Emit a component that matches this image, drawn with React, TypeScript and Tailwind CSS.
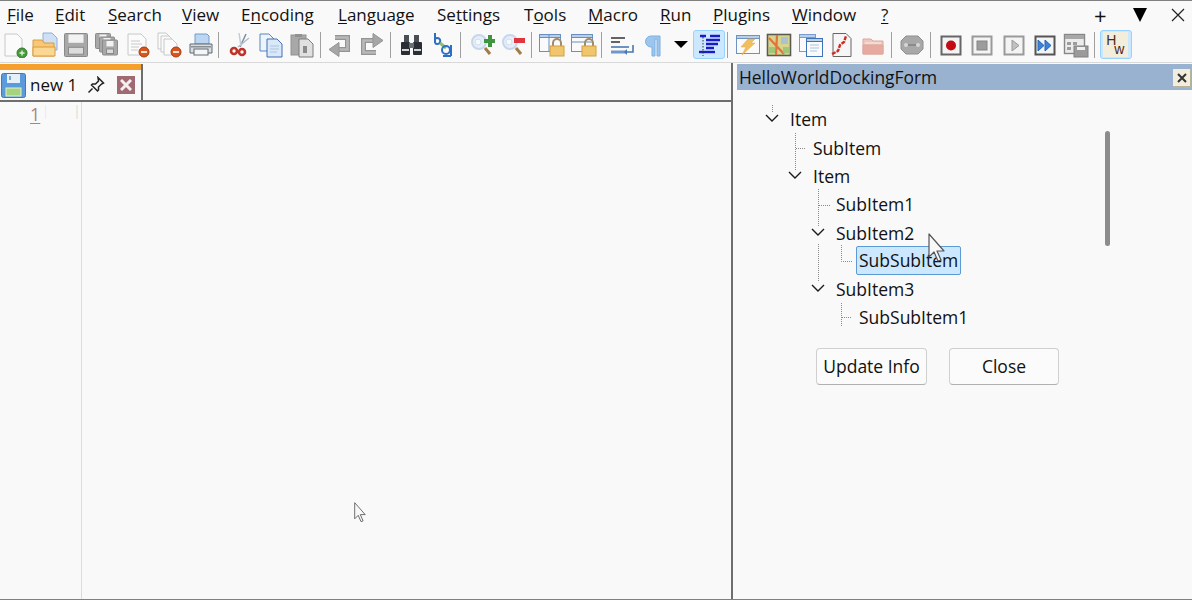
import type { ReactNode } from 'react'

const menus = [
  { label: 'File', key: 'F', width: 'w-[48px]' },
  { label: 'Edit', key: 'E', width: 'w-[53px]' },
  { label: 'Search', key: 'S', width: 'w-[74px]' },
  { label: 'View', key: 'V', width: 'w-[59px]' },
  { label: 'Encoding', key: 'n', width: 'w-[97px]' },
  { label: 'Language', key: 'L', width: 'w-[99px]' },
  { label: 'Settings', key: 't', width: 'w-[87px]' },
  { label: 'Tools', key: 'o', width: 'w-[64px]' },
  { label: 'Macro', key: 'M', width: 'w-[72px]' },
  { label: 'Run', key: 'R', width: 'w-[53px]' },
  { label: 'Plugins', key: 'P', width: 'w-[79px]' },
  { label: 'Window', key: 'W', width: 'w-[89px]' },
  { label: '?', key: '?', width: 'w-[20px]' },
]

function MenuLabel({ label, hot }: { label: string; hot: string }) {
  const i = label.indexOf(hot)
  return (
    <>
      {label.slice(0, i)}
      <span className="underline underline-offset-2">{hot}</span>
      {label.slice(i + 1)}
    </>
  )
}

function Ico({ children }: { children: ReactNode }) {
  return (
    <svg width="26" height="26" viewBox="0 0 26 26" className="shrink-0">
      {children}
    </svg>
  )
}

function Btn({ children, first }: { children: ReactNode; first?: boolean }) {
  return <div className={first ? 'w-[29px] flex justify-center' : 'w-[31.2px] flex justify-center'}>{children}</div>
}

function ActiveBtn({ children }: { children: ReactNode }) {
  return (
    <div className="w-[32px] h-[29px] flex items-center justify-center bg-[#cce8ff] border border-[#99d1ff] rounded-[3px]">
      {children}
    </div>
  )
}

function Sep() {
  return (
    <div className="w-[8px] pl-[2px] flex">
      <div className="w-px h-[26px] bg-[#a0a0a0]" />
    </div>
  )
}

const Page = ({ x = 5, y = 2, w = 15, h = 20, stroke = '#b5b5b5', fill = '#fbfbfb' }) => (
  <path d={`M${x} ${y}h${w - 5}l5 5v${h - 5}h-${w}z`} fill={fill} stroke={stroke} />
)

const Floppy = ({ x = 2, y = 2, s = 22, c = '#8a8a8a', f = '#a8a8a8' }) => (
  <g>
    <rect x={x} y={y} width={s} height={s} rx="1" fill={f} stroke={c} />
    <rect x={x + 4} y={y + 1} width={s - 8} height={s * 0.36} fill="#f2f2f2" />
    <rect x={x + 4} y={y + s * 0.6} width={s - 8} height={s * 0.3} fill="#dcdcdc" stroke={c} />
  </g>
)

const MinusBadge = ({ x = 19, y = 20 }) => (
  <g>
    <circle cx={x} cy={y} r="5" fill="#d9541e" stroke="#a83c10" />
    <rect x={x - 3} y={y - 1} width="6" height="2" fill="#f6e2c8" />
  </g>
)

const Lock = ({ x = 12, y = 12 }) => (
  <g>
    <path d={`M${x + 3} ${y + 4}v-3a4 4 0 0 1 8 0v3`} fill="none" stroke="#a08c68" strokeWidth="2" />
    <rect x={x} y={y + 4} width="14" height="10" fill="#f0c66c" stroke="#d4a040" />
  </g>
)

const Win = ({ x = 2, y = 3, w = 19, h = 17, c = '#6b8fc0' }) => (
  <g>
    <rect x={x} y={y} width={w} height={h} fill="#fafafa" stroke={c} />
    <rect x={x} y={y} width={w} height="3" fill="#b9cfe8" stroke={c} />
  </g>
)

const Framed = ({ children, c = '#808080' }: { children: ReactNode; c?: string }) => (
  <g>
    <rect x="3.5" y="4.5" width="19" height="18" fill="#f4f4f4" stroke={c} strokeWidth="2" />
    {children}
  </g>
)

const Magnify = ({ badge }: { badge: ReactNode }) => (
  <g>
    <circle cx="10" cy="10" r="7" fill="#e6eef8" stroke="#c6d7ec" strokeWidth="2" />
    <circle cx="9" cy="10" r="3" fill="#f5f8fc" stroke="#d0deee" />
    <path d="M16 16l5 6" stroke="#a37b45" strokeWidth="3" />
    {badge}
  </g>
)

function Toolbar() {
  return (
    <div className="h-[33px] pb-[2px] flex items-center">
      <Btn first>
        <Ico>
          <Page x={3} y={2} w={17} h={22} stroke="#c8c8c8" />
          <circle cx="20" cy="21" r="5" fill="#4a9a3c" stroke="#2f7a2a" />
          <path d="M20 18.500v5M17.500 21h5" stroke="#dff2d8" strokeWidth="1.4" />
        </Ico>
      </Btn>
      <Btn>
        <Ico>
          <Page x={11} y={1} w={14} h={17} stroke="#8fb0d8" fill="#cfe0f4" />
          <path d="M1 8h9l2 3h10v13H1z" fill="#f7c877" stroke="#dd9a3c" />
          <path d="M1 15h22v9H1z" fill="#fbd794" stroke="#dd9a3c" />
        </Ico>
      </Btn>
      <Btn>
        <Ico>
          <Floppy x={1.5} y={1.5} s={23} />
        </Ico>
      </Btn>
      <Btn>
        <Ico>
          <Floppy x={1.5} y={1.5} s={15} />
          <Floppy x={5.5} y={5} s={15} />
          <Floppy x={8.5} y={8} s={15} />
        </Ico>
      </Btn>
      <Btn>
        <Ico>
          <Page x={3} y={2} w={18} h={21} stroke="#c8c8c8" />
          <path d="M6 9h9M6 12h11M6 15h8M6 18h7" stroke="#c8c8c8" />
          <MinusBadge x={19} y={20} />
        </Ico>
      </Btn>
      <Btn>
        <Ico>
          <Page x={2} y={1} w={13} h={16} stroke="#c8c8c8" />
          <Page x={5} y={4} w={13} h={16} stroke="#c8c8c8" />
          <Page x={8} y={7} w={13} h={16} stroke="#c8c8c8" />
          <MinusBadge x={20} y={20} />
        </Ico>
      </Btn>
      <Btn>
        <Ico>
          <path d="M7 2h12l2 2v8H7z" fill="#bcd6f2" stroke="#6f9bd0" />
          <path d="M2 12h22v9H2z" fill="#dcdcdc" stroke="#5f6b78" />
          <rect x="6" y="17" width="14" height="6" fill="#f6f6f6" stroke="#5f6b78" />
          <rect x="3" y="14" width="20" height="1.500" fill="#8a8f96" />
        </Ico>
      </Btn>
      <Sep />
      <Btn>
        <Ico>
          <path d="M19 2l-6 13" stroke="#7a8ea4" strokeWidth="1.500" />
          <path d="M22 6L11 15" stroke="#b1bdca" strokeWidth="1.500" />
          <path d="M12 1l2 13" stroke="#c2ccd6" strokeWidth="1.500" />
          <circle cx="7" cy="19" r="3" fill="none" stroke="#bf3328" strokeWidth="2.600" />
          <circle cx="15" cy="20" r="3" fill="none" stroke="#bf3328" strokeWidth="2.600" />
        </Ico>
      </Btn>
      <Btn>
        <Ico>
          <Page x={2} y={2} w={14} h={17} stroke="#5b85c0" fill="#eef4fb" />
          <Page x={9} y={7} w={15} h={18} stroke="#3f6fb5" fill="#dbe8f7" />
          <path d="M12 14h9M12 17h9M12 20h7" stroke="#a9c4e4" />
        </Ico>
      </Btn>
      <Btn>
        <Ico>
          <rect x="2" y="3" width="15" height="20" fill="#a8a8a8" stroke="#919191" />
          <rect x="6" y="2" width="7" height="3" fill="#919191" />
          <Page x={10} y={7} w={14} h={18} stroke="#7d7d7d" fill="#e0e0e0" />
          <rect x="14" y="14" width="4" height="7" fill="#8a8a8a" />
        </Ico>
      </Btn>
      <Sep />
      <Btn>
        <Ico>
          <path d="M7 5.500h12.500v12H10" fill="none" stroke="#949494" strokeWidth="5" />
          <path d="M7 5.500h12.500v12H10" fill="none" stroke="#b8b8b8" strokeWidth="2.600" />
          <path d="M11 10.500l-10 7 10 7z" fill="#a6a6a6" stroke="#949494" />
        </Ico>
      </Btn>
      <Btn>
        <Ico>
          <path d="M16 8.500H4.500v12H17" fill="none" stroke="#949494" strokeWidth="5" />
          <path d="M16 8.500H4.500v12H17" fill="none" stroke="#b8b8b8" strokeWidth="2.600" />
          <path d="M14 1.500l10 7-10 7z" fill="#a6a6a6" stroke="#949494" />
        </Ico>
      </Btn>
      <Sep />
      <Btn>
        <Ico>
          <rect x="5" y="3" width="5" height="8" fill="#4a4f55" />
          <rect x="15" y="3" width="5" height="8" fill="#4a4f55" />
          <rect x="2" y="10" width="9" height="13" rx="1" fill="#2b2f34" />
          <rect x="14" y="10" width="9" height="13" rx="1" fill="#2b2f34" />
          <rect x="10" y="11" width="5" height="5" fill="#6a7078" />
          <rect x="3" y="17" width="7" height="2" fill="#d0d4d8" />
          <rect x="15" y="17" width="7" height="2" fill="#d0d4d8" />
        </Ico>
      </Btn>
      <Btn>
        <Ico>
          <path d="M3 1v10M3 7a3 3 0 1 1 0 4" fill="none" stroke="#2d6fc4" strokeWidth="2" transform="translate(2 0)" />
          <path d="M10 11l6 5" stroke="#8cc06a" strokeWidth="3" />
          <circle cx="16" cy="18" r="4" fill="none" stroke="#2d6fc4" strokeWidth="2" />
          <path d="M21 13v11M13 24h8" stroke="#2d6fc4" strokeWidth="2" />
        </Ico>
      </Btn>
      <Sep />
      <Btn>
        <Ico>
          <Magnify badge={<path d="M15 7h4V3h4v4h3v4h-3v4h-4v-4h-4z" fill="#3f9440" />} />
        </Ico>
      </Btn>
      <Btn>
        <Ico>
          <Magnify badge={<rect x="14" y="6" width="11" height="5" fill="#e0353f" />} />
        </Ico>
      </Btn>
      <Sep />
      <Btn>
        <Ico>
          <Win x={0.5} y={2.5} w={21} h={17} />
          <path d="M10 3v16" stroke="#6b8fc0" />
          <Lock x={11} y={10} />
        </Ico>
      </Btn>
      <Btn>
        <Ico>
          <Win x={0.5} y={2.5} w={21} h={17} />
          <path d="M1 10h20" stroke="#6b8fc0" />
          <Lock x={11} y={10} />
        </Ico>
      </Btn>
      <Sep />
      <Btn>
        <Ico>
          <path d="M1 6h14M1 10h9" stroke="#333" strokeWidth="1.600" />
          <path d="M1 15h18" stroke="#4a78b0" strokeWidth="1.600" />
          <path d="M1 20h16" stroke="#6f98c8" strokeWidth="3" />
          <path d="M23 13v7h-6" fill="none" stroke="#4a78b0" strokeWidth="1.600" />
          <path d="M17 17l-3 3 3 3z" fill="#4a78b0" />
        </Ico>
      </Btn>
      <Btn>
        <Ico>
          <path d="M19 4H10a5 5 0 0 0 0 11h1v9h3V7h2v17h3z" fill="#9cc6ee" stroke="#7fb0e0" />
        </Ico>
      </Btn>
      <div className="w-[23px] flex justify-center">
        <div className="w-0 h-0 border-x-[7px] border-x-transparent border-t-[7px] border-t-black" />
      </div>
      <ActiveBtn>
        <Ico>
          <path d="M4 4h6M14 4h10" stroke="#1a1ac8" strokeWidth="2.400" />
          <path d="M10 8h14M10 12h12M10 16h8" stroke="#1a1ac8" strokeWidth="2.400" />
          <path d="M3 20h16" stroke="#1a1ac8" strokeWidth="2.400" />
          <path d="M7 5v19" stroke="#333" strokeDasharray="1.500 1.500" />
        </Ico>
      </ActiveBtn>
      <Sep />
      <Btn>
        <Ico>
          <Win x={1.5} y={3.5} w={23} h={18} c="#6f93c0" />
          <path d="M13 7h7l-4 4h4L7 23l4-8H6z" fill="#f1bf5e" stroke="#e0a63e" strokeWidth="0.500" />
        </Ico>
      </Btn>
      <Btn>
        <Ico>
          <rect x="1.500" y="2.500" width="23" height="21" fill="#d8d48e" stroke="#5a5a50" strokeWidth="1.600" />
          <path d="M3 6l15 16M11 3l-1 20" stroke="#e0743a" strokeWidth="2.200" />
          <path d="M15 5h7v7h-7z" fill="#a9c3d4" />
          <path d="M3 15h6v6H3z" fill="#9fc77a" />
          <path d="M17 15h6v6h-6z" fill="#9fc77a" />
        </Ico>
      </Btn>
      <Btn>
        <Ico>
          <Win x={1.5} y={2.5} w={16} h={17} c="#7a9ccc" />
          <Win x={8.5} y={6.5} w={16} h={18} c="#3f72b8" />
          <path d="M12 13h9M12 16h9M12 19h7" stroke="#a9c4e4" />
        </Ico>
      </Btn>
      <Btn>
        <Ico>
          <Page x={4} y={1.5} w={18} h={23} stroke="#666" fill="#f6f6f6" />
          <path d="M3 22l6-3 2-6 4-3 2-6" fill="none" stroke="#d02c20" strokeWidth="2.400" strokeDasharray="4 1" />
        </Ico>
      </Btn>
      <Btn>
        <Ico>
          <path d="M3 7h8l2 2h10v13H3z" fill="#eec8c0" stroke="#dca89e" />
          <path d="M3 13h20v9H3z" fill="#e8aaa0" stroke="#dca89e" />
          <path d="M5 11h16" stroke="#f8eeea" />
        </Ico>
      </Btn>
      <Sep />
      <Btn>
        <Ico>
          <path d="M7 4h12l5 5v8l-5 5H7l-5-5V9z" fill="#a8a8a8" stroke="#8e8e8e" />
          <path d="M7 13h12" stroke="#8a8a8a" strokeWidth="2" />
          <circle cx="7" cy="13" r="2" fill="#d6d6d6" />
          <circle cx="19" cy="13" r="2" fill="#d6d6d6" />
        </Ico>
      </Btn>
      <Sep />
      <Btn>
        <Ico>
          <Framed c="#666">
            <circle cx="13" cy="13.500" r="5" fill="#c40a12" />
          </Framed>
        </Ico>
      </Btn>
      <Btn>
        <Ico>
          <Framed c="#9a9a9a">
            <rect x="8" y="9" width="10" height="9" fill="#9c9c9c" stroke="#848484" />
          </Framed>
        </Ico>
      </Btn>
      <Btn>
        <Ico>
          <Framed c="#9a9a9a">
            <path d="M11 8l7 5.500-7 5.500z" fill="#c0c0c0" stroke="#9a9a9a" />
          </Framed>
        </Ico>
      </Btn>
      <Btn>
        <Ico>
          <Framed c="#555">
            <path d="M6 8l6 5.500-6 5.500zM13 8l6 5.500-6 5.500z" fill="#3b83d8" stroke="#2766b8" />
          </Framed>
        </Ico>
      </Btn>
      <Btn>
        <Ico>
          <rect x="1.500" y="2.500" width="20" height="19" fill="#ececec" stroke="#888" strokeWidth="1.400" />
          <rect x="2" y="3" width="19" height="4" fill="#a8a8a8" />
          <path d="M4 10h4v3H4zM10 10h4v3h-4zM4 15h4v3H4z" fill="#9c9c9c" />
          <rect x="11" y="14" width="14" height="11" fill="#9a9a9a" stroke="#808080" />
          <rect x="14" y="15" width="8" height="3" fill="#f0f0f0" />
        </Ico>
      </Btn>
      <Sep />
      <ActiveBtn>
        <div className="w-[25px] h-[25px] bg-[#f3eddc] relative text-[#4a2a20] font-['Liberation_Sans',sans-serif] text-[14px] leading-none">
          <span className="absolute left-[3px] top-[1px]">H</span>
          <span className="absolute left-[11px] top-[10px]">w</span>
        </div>
      </ActiveBtn>
    </div>
  )
}

const rows = [
  { text: 'Item', pad: 'pl-[53px]' },
  { text: 'SubItem', pad: 'pl-[76px]' },
  { text: 'Item', pad: 'pl-[76px]' },
  { text: 'SubItem1', pad: 'pl-[99px]' },
  { text: 'SubItem2', pad: 'pl-[99px]' },
  { text: 'SubSubItem', pad: 'pl-[119px]', selected: true },
  { text: 'SubItem3', pad: 'pl-[99px]' },
  { text: 'SubSubItem1', pad: 'pl-[122px]' },
]

function TreeLines() {
  const chev = [
    [35, 26],
    [58, 83],
    [81, 140],
    [81, 196],
  ]
  return (
    <svg width="140" height="250" viewBox="0 0 140 250" className="absolute left-0 top-0" fill="none">
      <g stroke="#8a8a8a" strokeDasharray="1 1">
        <path d="M35.500 15v8" />
        <path d="M58.500 43v37M59 58.500h10" />
        <path d="M81.500 99v38M82 115.500h11" />
        <path d="M81.500 154v38" />
        <path d="M104.500 155v16.500h11" />
        <path d="M104.500 213v23M105 227.500h10" />
      </g>
      <g stroke="#1a1a1a" strokeWidth="1.400">
        {chev.map(([x, y]) => (
          <path key={y} d={`M${x - 6} ${y - 1}l6 6 6-6`} />
        ))}
      </g>
    </svg>
  )
}

function Arrow({ className }: { className: string }) {
  return (
    <svg viewBox="0 0 20 30" className={className}>
      <path
        d="M1 1v23l5-5 4 9 3-1-4-9h7z"
        fill="#f8f8f8"
        stroke="#555"
        strokeWidth="1.200"
        strokeLinejoin="round"
      />
    </svg>
  )
}

export default function App() {
  return (
    <div className="relative w-[1192px] h-[600px] overflow-hidden bg-[#f9f9f9] border-t border-b border-[#808080] text-[#111] font-['Open_Sans','Noto_Sans',sans-serif] text-[17px] flex flex-col">
      {/* menu */}
      <div className="h-[28px] pl-[7px] pr-[7px] flex items-center">
        {menus.map(m => (
          <div key={m.label} className={m.width}>
            <MenuLabel label={m.label} hot={m.key} />
          </div>
        ))}
        <div className="ml-auto flex items-center">
          <span className="text-[22px] leading-none w-[39px]">+</span>
          <div className="w-[38px]">
            <div className="w-0 h-0 border-x-[7px] border-x-transparent border-t-[14px] border-t-black" />
          </div>
          <svg width="14" height="14" viewBox="0 0 14 14" fill="none" stroke="#222" strokeWidth="1.200">
            <path d="M1 1l12 12M13 1L1 13" />
          </svg>
        </div>
      </div>

      <Toolbar />

      <div className="h-px bg-[#d9d9d9]" />

      <div className="flex-1 flex min-h-0">
        {/* editor */}
        <div className="w-[733px] flex flex-col border-r-2 border-[#6e6e6e]">
          <div className="h-[36px] mt-[1px] flex">
            <div className="w-[143px] flex flex-col border-r-2 border-[#6e6e6e]">
              <div className="h-[6px] bg-[#f5a02c]" />
              <div className="flex-1 flex items-center">
                <svg width="25" height="25" viewBox="0 0 25 25" className="ml-[1px] shrink-0">
                  <rect x="0.500" y="0.500" width="24" height="24" rx="2" fill="#5b9bdb" stroke="#4478b4" />
                  <rect x="6" y="1" width="13" height="9" fill="#e6f0fa" />
                  <rect x="8" y="3" width="2" height="4" fill="#7fa8d2" />
                  <rect x="5" y="15" width="15" height="8" fill="#a6d37e" stroke="#dff0cf" />
                </svg>
                <span className="ml-[4px] w-[52px]">new 1</span>
                <svg width="18" height="18" viewBox="0 0 18 18" className="ml-[5px]" fill="none" stroke="#222" strokeWidth="1.500">
                  <path d="M11 1.500l5.500 5.500-2 1-3 3 0 3-1 1-6-6 1-1 3 0 3-3zM5.500 12.500l-4 4" />
                </svg>
                <div className="ml-[12px] w-[18px] h-[18px] bg-[#9f6a72] flex items-center justify-center">
                  <svg width="12" height="12" viewBox="0 0 12 12" stroke="#f6eeee" strokeWidth="3">
                    <path d="M1 1l10 10M11 1L1 11" />
                  </svg>
                </div>
              </div>
            </div>
          </div>
          <div className="h-[2px] bg-[#6e6e6e]" />
          <div className="flex-1 flex">
            <div className="w-[82px] border-r border-[#dcdcdc] flex">
              <span className="ml-[30px] mt-[-1px] h-[22px] text-[18px] text-[#a98484] underline underline-offset-2">1</span>
              <div className="ml-[5px] mt-[3px] w-px h-[14px] bg-[#e4eef6]" />
              <div className="ml-[30px] mt-[3px] w-[2px] h-[14px] bg-[#eee8e0]" />
            </div>
          </div>
        </div>

        {/* docking panel */}
        <div className="flex-1 flex flex-col pl-[4px] min-w-0">
          <div className="h-[26px] mt-[1px] bg-[#99b2d0] pl-[2px] flex items-center justify-between text-[17.400px] leading-none">
            <span className="pt-[1px]">HelloWorldDockingForm</span>
            <div className="w-[18px] h-[19px] mr-[1px] mt-[3px] bg-[#f2eddd] border-b-2 border-r border-[#b9b39c] flex items-center justify-center">
              <svg width="10" height="10" viewBox="0 0 10 10" stroke="#333" strokeWidth="2">
                <path d="M1 1l8 8M9 1L1 9" />
              </svg>
            </div>
          </div>
          <div className="relative flex-1 pt-[15.400px] text-[17.500px]">
            <TreeLines />
            {rows.map((r, i) => (
              <div key={i} className={`h-[28.300px] flex items-center ${r.pad}`}>
                {r.selected ? (
                  <span className="h-[29px] mt-[-1px] pl-[2px] w-[105px] flex items-center bg-[#cce8ff] border border-[#5c9ad6] rounded-[2px]">
                    {r.text}
                  </span>
                ) : (
                  r.text
                )}
              </div>
            ))}
            <div className="mt-[16px] pl-[79px] flex gap-[22px]">
              <button className="w-[111px] h-[37px] bg-[#fbfbfb] border border-[#d0d0d0] border-b-[#b0b0b0] rounded-[4px]">Update Info</button>
              <button className="w-[110px] h-[37px] bg-[#fbfbfb] border border-[#d0d0d0] border-b-[#b0b0b0] rounded-[4px]">Close</button>
            </div>
            <div className="absolute left-[368px] top-[41px] w-[5px] h-[115px] rounded-full bg-[#8c8c8c]" />
          </div>
        </div>
      </div>

      {/* mouse pointers captured in the shot */}
      <Arrow className="absolute left-[354px] top-[501px] w-[14px] h-[21px]" />
      <Arrow className="absolute left-[928px] top-[232px] w-[20px] h-[30px]" />
    </div>
  )
}
